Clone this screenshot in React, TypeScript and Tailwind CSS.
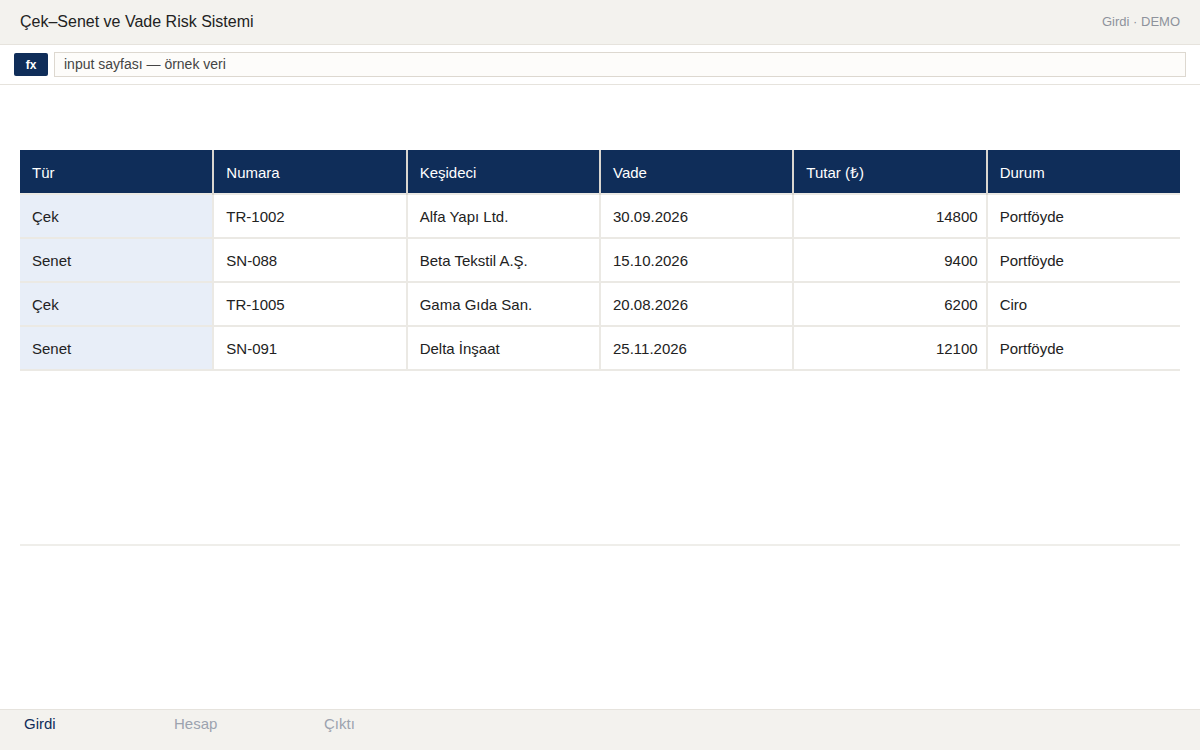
const rows = [
  { tur: "Çek", no: "TR-1002", kesideci: "Alfa Yapı Ltd.", vade: "30.09.2026", tutar: 14800, durum: "Portföyde" },
  { tur: "Senet", no: "SN-088", kesideci: "Beta Tekstil A.Ş.", vade: "15.10.2026", tutar: 9400, durum: "Portföyde" },
  { tur: "Çek", no: "TR-1005", kesideci: "Gama Gıda San.", vade: "20.08.2026", tutar: 6200, durum: "Ciro" },
  { tur: "Senet", no: "SN-091", kesideci: "Delta İnşaat", vade: "25.11.2026", tutar: 12100, durum: "Portföyde" },
];

const headers = ["Tür", "Numara", "Keşideci", "Vade", "Tutar (₺)", "Durum"];

export default function App() {
  return (
    <div className="flex h-[750px] w-full flex-col bg-white font-['Liberation_Sans',Arial,sans-serif] text-[#222]">
      {/* header */}
      <header className="flex h-[45px] items-center justify-between border-b border-[#e6e3dd] bg-[#f3f2ee] px-5">
        <h1 className="text-[16px] text-[#222]">Çek–Senet ve Vade Risk Sistemi</h1>
        <span className="text-[13px] text-[#8e929c]">Girdi · DEMO</span>
      </header>

      {/* formula bar */}
      <div className="flex h-[40px] items-center gap-[6px] border-b border-[#e6e3dd] px-[14px]">
        <div className="flex h-[23px] w-[34px] items-center justify-center rounded-[2px] bg-[#0f2d59] text-[12px] font-bold text-white">
          fx
        </div>
        <div className="flex h-[25px] flex-1 items-center border border-[#ddd8d0] bg-[#fdfcfa] px-[9px] text-[14px] text-[#444]">
          input sayfası — örnek veri
        </div>
      </div>

      {/* sheet */}
      <main className="flex-1 px-5 pt-[65px]">
        <div className="h-[396px] border-b-2 border-[#efeeea]">
          <table className="w-full table-fixed border-collapse text-[15px]">
            <thead>
              <tr className="bg-[#0f2d59] text-white">
                {headers.map((h) => (
                  <th
                    key={h}
                    className="h-[44px] border-x-2 border-[#d9d6d0] px-3 pt-[3px] text-left font-normal first:border-l-0 last:border-r-0"
                  >
                    {h}
                  </th>
                ))}
              </tr>
            </thead>
            <tbody>
              {rows.map((r) => (
                <tr key={r.no}>
                  <td className="h-[44px] border-2 border-l-0 border-[#ebe9e4] bg-[#e8eef8] px-3 pt-[2px]">{r.tur}</td>
                  <td className="border-2 border-[#ebe9e4] px-3 pt-[2px]">{r.no}</td>
                  <td className="border-2 border-[#ebe9e4] px-3 pt-[2px]">{r.kesideci}</td>
                  <td className="border-2 border-[#ebe9e4] px-3 pt-[2px]">{r.vade}</td>
                  <td className="border-2 border-[#ebe9e4] pr-2 pl-3 pt-[2px] text-right">{r.tutar}</td>
                  <td className="border-2 border-r-0 border-[#ebe9e4] px-3 pt-[2px]">{r.durum}</td>
                </tr>
              ))}
            </tbody>
          </table>
        </div>
      </main>

      {/* sheet tabs */}
      <footer className="flex h-[41px] border-t border-[#e6e3dd] bg-[#f3f2ee] pt-[3px] text-[15px]">
        <div className="w-[150px] pl-6 text-[#0f2d59]">Girdi</div>
        <div className="w-[150px] pl-6 text-[#9ca3af]">Hesap</div>
        <div className="w-[150px] pl-6 text-[#9ca3af]">Çıktı</div>
      </footer>
    </div>
  );
}
